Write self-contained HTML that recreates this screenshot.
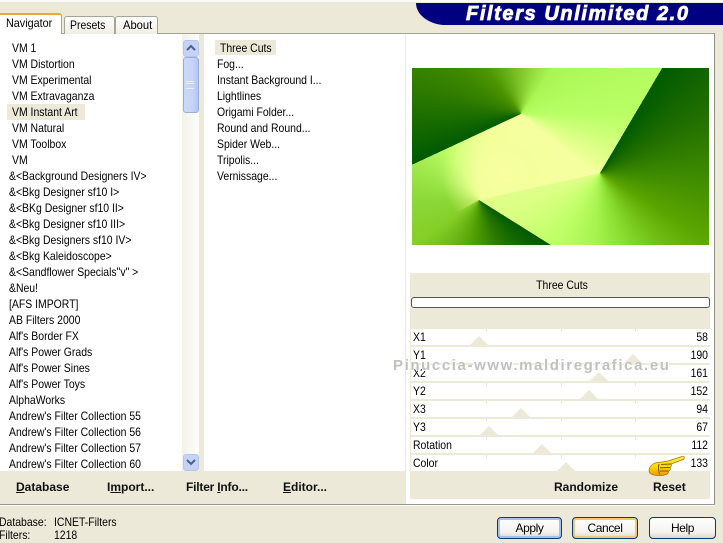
<!DOCTYPE html>
<html><head><meta charset="utf-8"><style>
html,body{margin:0;padding:0}
body{width:723px;height:540px;overflow:hidden;position:relative;background:#ece9d8;font-family:"Liberation Sans",sans-serif;font-size:12px;color:#000}
.a{position:absolute}
.t{position:absolute;white-space:nowrap;line-height:16px;height:16px;transform:scaleX(.87);transform-origin:left center}
.r{transform-origin:right center;width:58px;left:650px;text-align:right}
.b{font-weight:bold;font-size:12px;white-space:nowrap;position:absolute;line-height:16px;color:#111}
.btn{position:absolute;top:517px;height:20px;border:1px solid #003c74;border-radius:4px;background:linear-gradient(#fff,#f4f3ee 70%,#dcd8ca);text-align:center;line-height:20px;font-size:12px;letter-spacing:-.4px}
.row{position:absolute;left:411px;width:299px;height:16px;background:#fff}
.tri{position:absolute;width:0;height:0;border-left:10px solid transparent;border-right:10px solid transparent;border-bottom:10px solid #ece9d8}
.tk{position:absolute;width:1px;height:3px;background:#e8e6da}
.g{position:absolute;left:412px;top:68px;width:297px;height:177px}
</style></head><body>

<div class="a" style="left:0;top:0;width:723px;height:2px;background:#fbfaf5"></div>

<!-- tab panel edge -->
<div class="a" style="left:0;top:33px;width:714px;height:1px;background:#a5a595"></div>
<div class="a" style="left:714px;top:33px;width:1px;height:472px;background:#8f8f85"></div>
<div class="a" style="left:0;top:504px;width:715px;height:1px;background:#9a9a90"></div>
<div class="a" style="left:0;top:505px;width:715px;height:1px;background:#fbfaf5"></div>

<!-- tabs -->
<div class="a" style="left:-4px;top:13px;width:66px;height:21px;background:#fff;border-right:1px solid #a5a595;border-radius:3px 3px 0 0;border-top:2px solid #e9a93a;box-sizing:border-box"></div>
<div class="t" style="left:6px;top:15px;transform:scaleX(.9)">Navigator</div>
<div class="a" style="left:64px;top:16px;width:49px;height:17px;background:linear-gradient(#fff,#f0eee4);border:1px solid #a5a595;border-bottom:0;border-radius:3px 3px 0 0"></div>
<div class="t" style="left:70px;top:17px">Presets</div>
<div class="a" style="left:115px;top:16px;width:41px;height:17px;background:linear-gradient(#fff,#f0eee4);border:1px solid #a5a595;border-bottom:0;border-radius:3px 3px 0 0"></div>
<div class="t" style="left:123px;top:17px;transform:scaleX(.93)">About</div>

<!-- banner -->
<div class="a" style="left:416px;top:3px;width:307px;height:22px;background:#000080;border-radius:0 0 0 30px / 0 0 0 22px"></div>
<div class="a" style="left:466px;top:4px;white-space:nowrap;height:20px;line-height:20px;font-size:20px;font-weight:bold;font-style:italic;color:#fff;letter-spacing:1.6px;-webkit-text-stroke:.8px #fff">Filters Unlimited 2.0</div>

<!-- white areas -->
<div class="a" style="left:0;top:34px;width:182px;height:437px;background:#fff"></div>
<div class="a" style="left:199px;top:34px;width:5px;height:437px;background:#ece9d8"></div>
<div class="a" style="left:204px;top:34px;width:201px;height:437px;background:#fff"></div>
<div class="a" style="left:182px;top:34px;width:17px;height:437px;background:linear-gradient(90deg,#f3f1e8,#fdfdfa)"></div>
<div class="a" style="left:406px;top:34px;width:308px;height:470px;background:#fff"></div>

<!-- scrollbar -->
<div class="a" style="left:183px;top:40px;width:14px;height:15px;background:#c5d3f8;border:1px solid #b4c4ea;border-radius:3px"></div>
<svg class="a" style="left:183px;top:40px" width="16" height="16"><path d="M4 10 L8 6 L12 10" fill="none" stroke="#4d6185" stroke-width="2"/></svg>
<div class="a" style="left:183px;top:57px;width:14px;height:54px;background:linear-gradient(90deg,#cbd8f8,#c6d4f7 60%,#b4c5f1);border:1px solid #98aee0;border-radius:3px"></div>
<div class="a" style="left:186px;top:81px;width:8px;height:6px;border-top:1px solid #e8eefc;border-bottom:1px solid #e8eefc"></div>
<div class="a" style="left:186px;top:83px;width:8px;height:1px;background:#e8eefc"></div>
<div class="a" style="left:183px;top:454px;width:14px;height:15px;background:#c5d3f8;border:1px solid #b4c4ea;border-radius:3px"></div>
<svg class="a" style="left:183px;top:454px" width="16" height="16"><path d="M4 6 L8 10 L12 6" fill="none" stroke="#4d6185" stroke-width="2"/></svg>

<!-- left list -->
<div class="a" style="left:7px;top:104px;width:78px;height:16px;background:#ece9d8"></div>
<div class="t" style="left:12px;top:40px">VM 1</div>
<div class="t" style="left:12px;top:56px">VM Distortion</div>
<div class="t" style="left:12px;top:72px">VM Experimental</div>
<div class="t" style="left:12px;top:88px">VM Extravaganza</div>
<div class="t" style="left:12px;top:104px">VM Instant Art</div>
<div class="t" style="left:12px;top:120px">VM Natural</div>
<div class="t" style="left:12px;top:136px">VM Toolbox</div>
<div class="t" style="left:12px;top:152px">VM</div>
<div class="t" style="left:9px;top:168px">&amp;&lt;Background Designers IV&gt;</div>
<div class="t" style="left:9px;top:184px">&amp;&lt;Bkg Designer sf10 I&gt;</div>
<div class="t" style="left:9px;top:200px">&amp;&lt;BKg Designer sf10 II&gt;</div>
<div class="t" style="left:9px;top:216px">&amp;&lt;Bkg Designer sf10 III&gt;</div>
<div class="t" style="left:9px;top:232px">&amp;&lt;Bkg Designers sf10 IV&gt;</div>
<div class="t" style="left:9px;top:248px">&amp;&lt;Bkg Kaleidoscope&gt;</div>
<div class="t" style="left:9px;top:264px">&amp;&lt;Sandflower Specials"v" &gt;</div>
<div class="t" style="left:9px;top:280px">&amp;Neu!</div>
<div class="t" style="left:9px;top:296px">[AFS IMPORT]</div>
<div class="t" style="left:9px;top:312px">AB Filters 2000</div>
<div class="t" style="left:9px;top:328px">Alf's Border FX</div>
<div class="t" style="left:9px;top:344px">Alf's Power Grads</div>
<div class="t" style="left:9px;top:360px">Alf's Power Sines</div>
<div class="t" style="left:9px;top:376px">Alf's Power Toys</div>
<div class="t" style="left:9px;top:392px">AlphaWorks</div>
<div class="t" style="left:9px;top:408px">Andrew's Filter Collection 55</div>
<div class="t" style="left:9px;top:424px">Andrew's Filter Collection 56</div>
<div class="t" style="left:9px;top:440px">Andrew's Filter Collection 57</div>
<div class="t" style="left:9px;top:456px">Andrew's Filter Collection 60</div>

<!-- middle list -->
<div class="a" style="left:215px;top:40px;width:61px;height:15px;background:#ece9d8"></div>
<div class="t" style="left:220px;top:40px">Three Cuts</div>
<div class="t" style="left:217px;top:56px">Fog...</div>
<div class="t" style="left:217px;top:72px">Instant Background I...</div>
<div class="t" style="left:217px;top:88px">Lightlines</div>
<div class="t" style="left:217px;top:104px">Origami Folder...</div>
<div class="t" style="left:217px;top:120px">Round and Round...</div>
<div class="t" style="left:217px;top:136px">Spider Web...</div>
<div class="t" style="left:217px;top:152px">Tripolis...</div>
<div class="t" style="left:217px;top:168px">Vernissage...</div>

<!-- preview -->
<div class="g" style="background:#f6ffa0"></div>
<div class="g" style="clip-path:polygon(109px 46px,0 97px,0 0,250px 0,188px 105px);background:conic-gradient(from 245deg at 109px 46px,#005a00 0deg,#2f7c00 40deg,#4c9400 75deg,#80c82a 115deg,#aaf552 150deg,#b8ff66 205deg,#f0ff98 242deg,#ffffa8 275deg,#ffffa8 360deg)"></div>
<div class="g" style="clip-path:polygon(188px 105px,250px 0,297px 0,297px 177px,139px 177px,67px 132px);background:conic-gradient(from 30.6deg at 188px 105px,#005a00 0deg,#226f00 30deg,#3c8a00 60deg,#5ca600 92deg,#8ade30 130deg,#a8f450 155deg,#c0ff68 184deg,#d8ff80 212deg,#eeff98 250deg,#f2ff9a 360deg)"></div>
<div class="g" style="clip-path:polygon(67px 132px,139px 177px,0 177px,0 97px,109px 46px);background:conic-gradient(from 122deg at 67px 132px,#005a00 0deg,#2d7a00 35deg,#4c9a00 60deg,#86cf28 114deg,#8cd838 148deg,#a0e84c 176deg,#c0ff68 210deg,#f2ff98 250deg,#ffffa8 285deg,#ffffa8 360deg)"></div>
<div class="g" style="clip-path:polygon(109px 46px,0 97px,0 170px,67px 132px,188px 105px);background:radial-gradient(circle at 95px 105px,#f8ffa0 0,#f4ff9c 25px,rgba(220,255,130,0) 65px)"></div>

<!-- params -->
<div class="a" style="left:410px;top:273px;width:300px;height:56px;background:#ece9d8"></div>
<div class="t" style="left:410px;top:277px;width:304px;text-align:center;transform-origin:center">Three Cuts</div>
<div class="a" style="left:411px;top:297px;width:297px;height:9px;background:#fff;border:1px solid #555;border-radius:3px"></div>
<div class="a" style="left:410px;top:329px;width:300px;height:170px;background:#ece9d8"></div>
<div class="row" style="top:329px"></div>
<div class="row" style="top:347px"></div>
<div class="row" style="top:365px"></div>
<div class="row" style="top:383px"></div>
<div class="row" style="top:401px"></div>
<div class="row" style="top:419px"></div>
<div class="row" style="top:437px"></div>
<div class="row" style="top:455px"></div>
<div class="tk" style="left:486px;top:329px"></div><div class="tk" style="left:561px;top:329px"></div><div class="tk" style="left:635px;top:329px"></div>
<div class="tk" style="left:486px;top:383px"></div><div class="tk" style="left:561px;top:383px"></div><div class="tk" style="left:635px;top:383px"></div>
<div class="tk" style="left:486px;top:401px"></div><div class="tk" style="left:561px;top:401px"></div><div class="tk" style="left:635px;top:401px"></div>
<div class="tk" style="left:486px;top:419px"></div><div class="tk" style="left:561px;top:419px"></div><div class="tk" style="left:635px;top:419px"></div>
<div class="tk" style="left:486px;top:437px"></div><div class="tk" style="left:561px;top:437px"></div><div class="tk" style="left:635px;top:437px"></div>
<div class="tk" style="left:486px;top:455px"></div><div class="tk" style="left:561px;top:455px"></div><div class="tk" style="left:635px;top:455px"></div>
<div class="tri" style="left:469px;top:336px"></div>
<div class="tri" style="left:623px;top:354px"></div>
<div class="tri" style="left:589px;top:372px"></div>
<div class="tri" style="left:579px;top:390px"></div>
<div class="tri" style="left:511px;top:408px"></div>
<div class="tri" style="left:479px;top:426px"></div>
<div class="tri" style="left:532px;top:444px"></div>
<div class="tri" style="left:556px;top:462px"></div>

<div class="t" style="left:413px;top:329px">X1</div><div class="t r" style="top:329px">58</div>
<div class="t" style="left:413px;top:347px">Y1</div><div class="t r" style="top:347px">190</div>
<div class="t" style="left:413px;top:365px">X2</div><div class="t r" style="top:365px">161</div>
<div class="t" style="left:413px;top:383px">Y2</div><div class="t r" style="top:383px">152</div>
<div class="t" style="left:413px;top:401px">X3</div><div class="t r" style="top:401px">94</div>
<div class="t" style="left:413px;top:419px">Y3</div><div class="t r" style="top:419px">67</div>
<div class="t" style="left:413px;top:437px">Rotation</div><div class="t r" style="top:437px">112</div>
<div class="t" style="left:413px;top:455px">Color</div><div class="t r" style="top:455px">133</div>

<!-- watermark -->
<div class="a" style="left:393px;top:358px;white-space:nowrap;line-height:16px;font-size:15px;font-weight:bold;letter-spacing:1.6px;color:#c0c0bc;text-shadow:1px 1px 0 #fff,-1px 0 0 #fff">Pinuccia-www.maldiregrafica.eu</div>

<!-- hand -->
<svg class="a" style="left:648px;top:455px" width="38" height="22" viewBox="0 0 38 22">
<defs><linearGradient id="h" x1="0" y1="0" x2="0" y2="1"><stop offset="0" stop-color="#fff04a"/><stop offset=".55" stop-color="#ffd800"/><stop offset="1" stop-color="#e89a00"/></linearGradient></defs>
<path d="M1 15 C2 9 8 7 14 7 L20 6 L34 1.500 C37 1 37 3.500 35 4.500 L23 9 C24 10 23 12 22 12.500 C23 14 22 15.500 20.500 16 C21 18 19 19.500 17.500 19.500 C14 21 6 21 3 19 C1.500 18 1 16 1 15Z" fill="url(#h)" stroke="#a86a00" stroke-width=".7"/>
<path d="M13 9.500 L23 9 M12 12.800 L22 12.500 M12 16 L20.500 16 M11 9 C10 12 10.500 16 11.500 19.500" fill="none" stroke="#8a5200" stroke-width="1"/>
</svg>

<!-- bottom bar -->
<div class="b" style="left:16px;top:479px"><u>D</u>atabase</div>
<div class="b" style="left:107px;top:479px">I<u>m</u>port...</div>
<div class="b" style="left:186px;top:479px;letter-spacing:-.2px">Filter <u>I</u>nfo...</div>
<div class="b" style="left:283px;top:479px"><u>E</u>ditor...</div>
<div class="b" style="left:554px;top:479px">Randomize</div>
<div class="b" style="left:653px;top:479px">Reset</div>

<!-- status -->
<div class="t" style="left:-1px;top:514px">Database:</div>
<div class="t" style="left:54px;top:514px">ICNET-Filters</div>
<div class="t" style="left:-1px;top:527px">Filters:</div>
<div class="t" style="left:54px;top:527px">1218</div>

<!-- buttons -->
<div class="btn" style="left:497px;width:63px;box-shadow:inset 0 0 0 2px #a9c1ea">Apply</div>
<div class="btn" style="left:572px;width:64px;box-shadow:inset 0 0 0 2px #f0c878">Cancel</div>
<div class="btn" style="left:649px;width:65px">Help</div>
</body></html>
